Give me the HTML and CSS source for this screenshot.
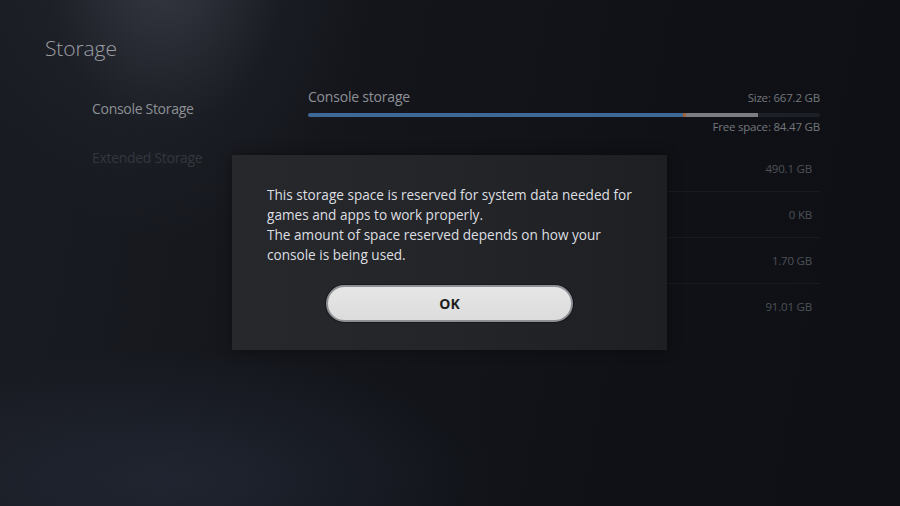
FILE: index.html
```
<!DOCTYPE html>
<html lang="en">
  <head>
    <meta charset="utf-8">
    <title>Storage</title>
    <link rel="stylesheet" href="styles.css">
  </head>
  <body>
    <div class="screen">
      <div class="side">
        <h1 class="title">Storage</h1>
        <div class="nav">
          <div class="nav-item current">Console Storage</div>
          <div class="nav-item">Extended Storage</div>
        </div>
      </div>
      <div class="main">
        <div class="head">
          <span class="label">Console storage</span>
          <span class="small">Size: 667.2 GB</span>
        </div>
        <div class="bar">
          <div class="used" style="width: 73.2%"></div>
          <div class="mark"></div>
          <div class="sys" style="width: 14.1%"></div>
        </div>
        <div class="free small">Free space: 84.47 GB</div>
        <div class="list">
          <div class="row">490.1 GB</div>
          <div class="row">0 KB</div>
          <div class="row">1.70 GB</div>
          <div class="row">91.01 GB</div>
        </div>
      </div>

      <div class="dialog">
        <p class="msg">This storage space is reserved for system data needed for<br>games and apps to work properly.<br>The amount of space reserved depends on how your<br>console is being used.</p>
        <div class="actions">
          <button class="ok">OK</button>
        </div>
      </div>
    </div>
  </body>
</html>
```

FILE: styles.css
```
body{
  margin: 0;
  background-color: #111319;
  font-family: "Open Sans", "Noto Sans", sans-serif;
  overflow: hidden;
}
.screen{
  position: relative;
  display: flex;
  width: 900px;
  height: 506px;
  background:
    radial-gradient(ellipse 200px 280px at 165px -40px, rgba(120,125,140,0.33), rgba(60,64,76,0.12) 60%, rgba(0,0,0,0) 100%),
    radial-gradient(ellipse 330px 130px at 170px 480px, rgba(40,48,64,0.55), rgba(0,0,0,0) 100%),
    linear-gradient(100deg, #1a1c23 0%, #14161c 35%, #0f1116 70%, #0e1015 100%);
}
.side{
  width: 308px;
  padding: 35px 0 0 45px;
  box-sizing: border-box;
}
.title{
  margin: 0;
  font-size: 21px;
  font-weight: 300;
  line-height: 27px;
  color: #9c9ea4;
  letter-spacing: -0.1px;
}
.nav{
  margin-top: 34px;
  padding-left: 47px;
}
.nav-item{
  height: 49px;
  line-height: 26px;
  font-size: 14px;
  color: #34373d;
  letter-spacing: -0.3px;
}
.nav-item.current{
  color: #8d9095;
}
.main{
  width: 512px;
  padding-top: 87px;
}
.head{
  display: flex;
  justify-content: space-between;
  align-items: baseline;
  line-height: 20px;
}
.label{
  font-size: 14px;
  color: #8e9196;
  letter-spacing: -0.2px;
}
.small{
  font-size: 11.5px;
  color: #74777c;
  letter-spacing: -0.2px;
}
.bar{
  display: flex;
  height: 4px;
  margin-top: 5px;
  background-color: #1d2026;
  border-radius: 2px;
  overflow: hidden;
}
.used{
  background-color: #3e6896;
}
.mark{
  width: 3px;
  background-color: #a0643a;
}
.sys{
  background-color: #7c7d80;
}
.free{
  text-align: right;
  line-height: 18px;
  margin-top: 1px;
}
.list{
  margin-top: 9px;
  margin-left: -8px;
}
.row{
  height: 46px;
  line-height: 46px;
  text-align: right;
  padding-right: 8px;
  font-size: 11.5px;
  color: #4e5157;
  letter-spacing: -0.2px;
  border-top: 1px solid #181b21;
  box-sizing: border-box;
}
.row:first-child{
  border-top-color: transparent;
}
.dialog{
  position: absolute;
  left: 232px;
  top: 155px;
  width: 435px;
  height: 195px;
  box-sizing: border-box;
  padding: 30px 0 0 35px;
  background: linear-gradient(90deg, #26282c 0%, #232529 50%, #1d1f23 100%);
  box-shadow: 0 0 12px rgba(0,0,0,0.4);
}
.msg{
  margin: 0;
  font-size: 13.6px;
  line-height: 20px;
  color: #dedfe0;
  letter-spacing: 0;
}
.actions{
  margin-top: 20px;
  padding-right: 35px;
  display: flex;
  justify-content: center;
}
.ok{
  width: 247px;
  height: 37px;
  border-radius: 19px;
  border: 2px solid #8e9095;
  box-shadow: 0 0 0 1px #15171a;
  background: linear-gradient(180deg, #e6e6e6, #dcdcdc);
  font-family: "Open Sans", "Noto Sans", sans-serif;
  font-size: 14px;
  font-weight: 700;
  color: #1e1e1e;
  padding: 0;
}
```
